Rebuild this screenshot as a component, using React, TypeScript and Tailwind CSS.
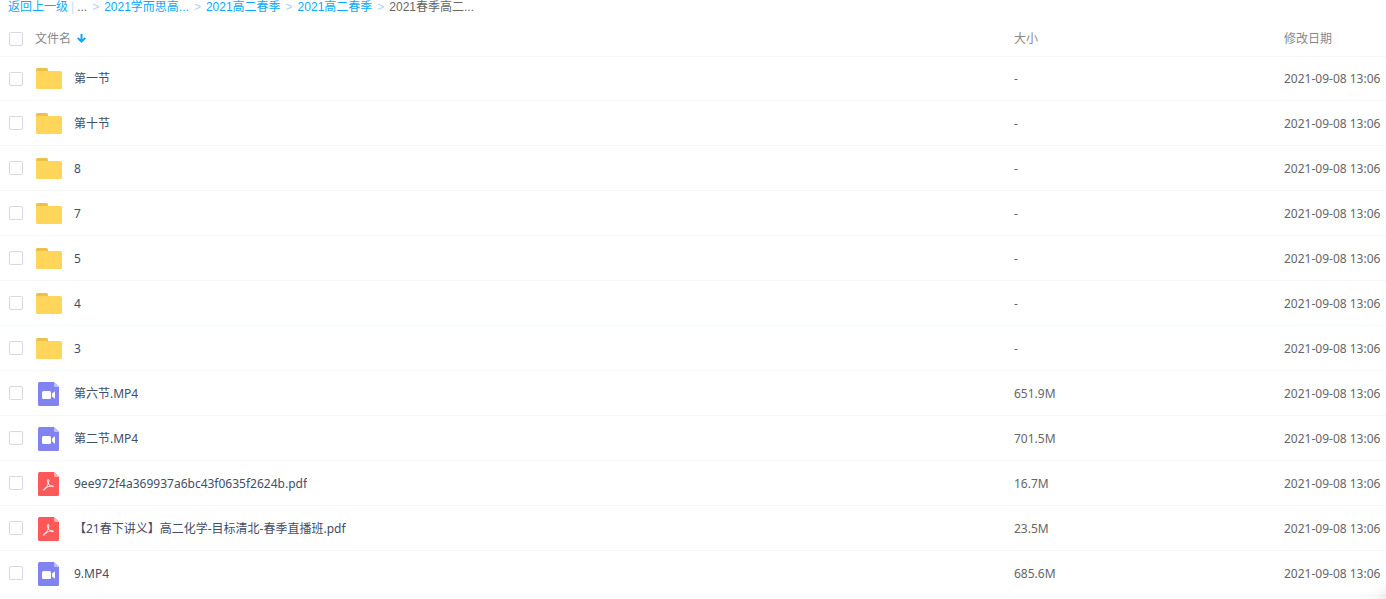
import clsx from "clsx"

type FileKind = "folder" | "video" | "pdf"

interface FileItem {
    name: string
    kind: FileKind
    size: string
    date: string
}

const files: FileItem[] = [
    { name: "第一节", kind: "folder", size: "-", date: "2021-09-08 13:06" },
    { name: "第十节", kind: "folder", size: "-", date: "2021-09-08 13:06" },
    { name: "8", kind: "folder", size: "-", date: "2021-09-08 13:06" },
    { name: "7", kind: "folder", size: "-", date: "2021-09-08 13:06" },
    { name: "5", kind: "folder", size: "-", date: "2021-09-08 13:06" },
    { name: "4", kind: "folder", size: "-", date: "2021-09-08 13:06" },
    { name: "3", kind: "folder", size: "-", date: "2021-09-08 13:06" },
    { name: "第六节.MP4", kind: "video", size: "651.9M", date: "2021-09-08 13:06" },
    { name: "第二节.MP4", kind: "video", size: "701.5M", date: "2021-09-08 13:06" },
    { name: "9ee972f4a369937a6bc43f0635f2624b.pdf", kind: "pdf", size: "16.7M", date: "2021-09-08 13:06" },
    { name: "【21春下讲义】高二化学-目标清北-春季直播班.pdf", kind: "pdf", size: "23.5M", date: "2021-09-08 13:06" },
    { name: "9.MP4", kind: "video", size: "685.6M", date: "2021-09-08 13:06" },
]

const parents = ["2021学而思高...", "2021高二春季", "2021高二春季"]

const FolderIcon = () => (
    <svg width="26" height="21" viewBox="0 0 26 21" aria-hidden="true">
        <path d="M0 6V1.5Q0 0 1.5 0H10.5Q12 0 12 1.5V6Z" fill="#eebf4b" />
        <path d="M0 3H24.5Q26 3 26 4.5V19.5Q26 21 24.5 21H1.5Q0 21 0 19.5Z" fill="#ffd659" />
    </svg>
)

const VideoIcon = () => (
    <svg width="26" height="26" viewBox="-2 -2 26 26" aria-hidden="true">
        <path d="M1.5 0H16L21 5V22.5Q21 24 19.5 24H1.5Q0 24 0 22.5V1.5Q0 0 1.5 0Z" fill="#8183f1" />
        <path d="M16 0L21 5H17.2Q16 5 16 3.8Z" fill="#bfc0f9" />
        <rect x="4" y="9" width="9" height="8" rx="1.5" fill="#fff" />
        <path d="M17 9.2V16.8L14 14.4V11.6Z" fill="#fff" />
    </svg>
)

const PdfIcon = () => (
    <svg width="26" height="26" viewBox="-2 -2 26 26" aria-hidden="true">
        <path d="M1.5 0H16L21 5V22.5Q21 24 19.5 24H1.5Q0 24 0 22.5V1.5Q0 0 1.5 0Z" fill="#ff5858" />
        <path d="M16 0L21 5H17.2Q16 5 16 3.8Z" fill="#ffacac" />
        <path
            d="M9.8 7.6C11.4 6.8 11 9.4 10.2 11.6C9.2 14.4 7.6 17.4 6.2 18.2C4.8 18.6 5.4 17 7.2 16C9.4 14.8 12.2 13.8 14.2 13.7C16.2 13.7 15.8 14.9 14.2 14.7C12.4 14.3 10.8 12.6 10 10.9C9.4 9.4 9.1 7.9 9.8 7.6Z"
            fill="none"
            stroke="#fff"
            strokeWidth="0.9"
            strokeLinejoin="round"
        />
    </svg>
)

const icons = {
    folder: FolderIcon,
    video: VideoIcon,
    pdf: PdfIcon,
}

const Checkbox = ({ label }: { label: string }) => (
    <input
        type="checkbox"
        aria-label={label}
        className="ml-[9px] block size-3.5 appearance-none rounded-[2px] border border-[#d4d9e5] bg-white checked:bg-[#09aaff]"
    />
)

const Breadcrumb = () => (
    <nav className="flex h-5 pl-2 font-['Liberation_Sans','Noto_Sans_CJK_SC',sans-serif] text-xs/[14px] whitespace-nowrap">
        <a href="#" className="text-[#09aaff]">返回上一级</a>
        <span className="mx-[3px] text-[#c4dbfe]">|</span>
        <span className="text-[#666]">...</span>
        {parents.map((name, i) => (
            <span key={i}>
                <span className="mx-[5px] text-[#b4d0fc]">&gt;</span>
                <a href="#" className="text-[#09aaff]">{name}</a>
            </span>
        ))}
        <span className="mx-[5px] text-[#b4d0fc]">&gt;</span>
        <span className="text-[#666]">2021春季高二...</span>
    </nav>
)

const FileRow = ({ file, first }: { file: FileItem; first: boolean }) => {
    const Icon = icons[file.kind]
    const textPad = first ? "pt-0" : "pt-0.5"
    return (
        <tr className={clsx(first ? "h-11" : "h-[45px]", "*:border-b *:border-[#f2f6fd] *:p-0")}>
            <td>
                <Checkbox label={file.name} />
            </td>
            <td>
                <div className="flex items-center gap-3 pl-px">
                    <Icon />
                    <a href="#" className={clsx("truncate text-[#424e67]", textPad)}>{file.name}</a>
                </div>
            </td>
            <td>
                <div className={textPad}>{file.size}</div>
            </td>
            <td>
                <div className={textPad}>{file.date}</div>
            </td>
        </tr>
    )
}

const App = () => {
    return (
        <div className="overflow-hidden bg-white font-['Noto_Sans','Noto_Sans_CJK_SC',sans-serif] text-xs text-[#666]">
            <Breadcrumb />
            <table className="w-full table-fixed border-separate border-spacing-0 text-left whitespace-nowrap">
                <colgroup>
                    <col className="w-[35px]" />
                    <col />
                    <col className="w-[270px]" />
                    <col className="w-[102px]" />
                </colgroup>
                <thead>
                    <tr className="h-[37px] text-[#888] *:border-b *:border-[#f2f6fd] *:p-0 *:pt-px *:font-normal">
                        <th>
                            <Checkbox label="全选" />
                        </th>
                        <th>
                            <button type="button" className="flex items-center gap-1.5">
                                文件名
                                <svg width="9" height="9" viewBox="0 0 9 9" fill="none" stroke="#09aaff" strokeWidth="2" aria-hidden="true">
                                    <path d="M4.5 0V8M0.7 4L4.5 7.6L8.3 4" />
                                </svg>
                            </button>
                        </th>
                        <th>大小</th>
                        <th>修改日期</th>
                    </tr>
                </thead>
                <tbody>
                    {files.map((file, i) => (
                        <FileRow key={file.name} file={file} first={i === 0} />
                    ))}
                </tbody>
            </table>
            {/* shadow of the floating button that sits past the corner */}
            <div className="pointer-events-none fixed -right-10 -bottom-10 size-10 rounded-full shadow-[0_0_20px_8px_rgba(0,0,0,0.2)]" />
        </div>
    )
}

export default App
